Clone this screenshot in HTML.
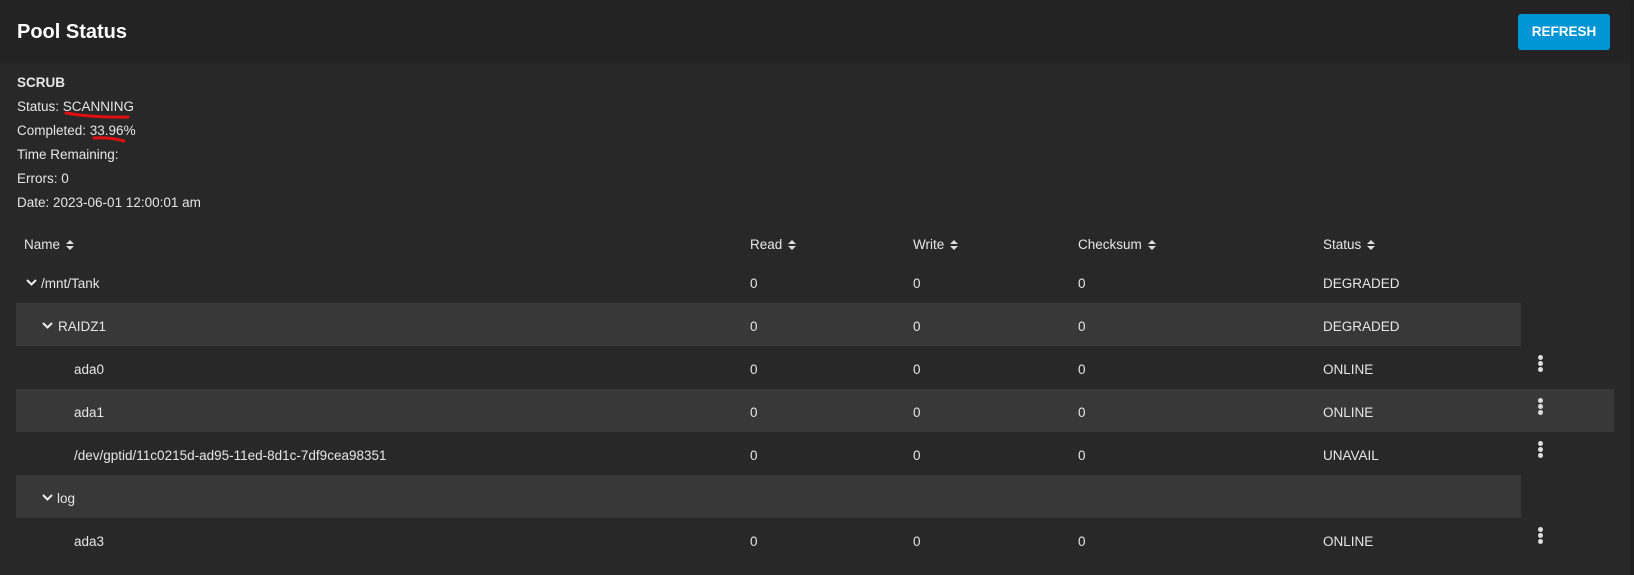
<!DOCTYPE html>
<html><head><style>
body{margin:0;width:1634px;height:575px;background:#1e1e1e;font-family:"Liberation Sans",sans-serif;color:#e6e6e6;overflow:hidden;position:relative}
.card{position:absolute;left:0;top:0;width:1630px;height:575px;background:#282828;border-top-right-radius:4px}
.hdr{position:absolute;left:0;top:0;width:1630px;height:63px;background:#232323;border-top-right-radius:4px}
.title{position:absolute;left:17px;top:21px;font-size:20px;font-weight:bold;color:#fff}
.btn{position:absolute;left:1518px;top:14px;width:92px;height:36px;background:#0095d5;border-radius:3px;color:#fff;font-weight:bold;font-size:13.5px;text-align:center;line-height:36px}
.t{position:absolute;font-size:13.5px;white-space:nowrap}
.stripe{position:absolute;left:16px;height:43px;background:#383838}
.dots{position:absolute;width:5px}
.dots i{display:block;width:5px;height:5px;border-radius:50%;background:#ddd;margin-bottom:1px}
.sort{display:inline-block;vertical-align:middle;margin-left:6px}
</style></head><body>
<div class="card"></div>
<div class="hdr"></div>
<div class="title">Pool Status</div>
<div class="btn">REFRESH</div>

<div class="t" style="left:17px;top:75px;font-weight:bold">SCRUB</div>
<div class="t" style="left:17px;top:99px">Status: SCANNING</div>
<div class="t" style="left:17px;top:123px">Completed: 33.96%</div>
<div class="t" style="left:17px;top:147px">Time Remaining:</div>
<div class="t" style="left:17px;top:171px">Errors: 0</div>
<div class="t" style="left:17px;top:195px">Date: 2023-06-01 12:00:01 am</div>
<svg style="position:absolute;left:0;top:0" width="200" height="150"><path d="M66 113 Q95 118 128 117" stroke="#e01010" stroke-width="3" fill="none" stroke-linecap="round"/><path d="M94 138 Q110 137 124 141" stroke="#e01010" stroke-width="3" fill="none" stroke-linecap="round"/></svg>

<div class="stripe" style="top:303px;width:1505px"></div>
<div class="stripe" style="top:389px;width:1598px"></div>
<div class="stripe" style="top:475px;width:1505px"></div>

<svg width="0" height="0" style="position:absolute"><defs><g id="s"><path d="M0 4 L4 0 L8 4Z M0 6 L4 10 L8 6Z" fill="#ddd"/></g><g id="c"><path d="M1 2 L5.5 6.5 L10 2" stroke="#eee" stroke-width="2" fill="none"/></g></defs></svg>

<div class="t" style="left:24px;top:237px">Name<svg class="sort" width="8" height="10"><use href="#s"/></svg></div>
<div class="t" style="left:750px;top:237px">Read<svg class="sort" width="8" height="10"><use href="#s"/></svg></div>
<div class="t" style="left:913px;top:237px">Write<svg class="sort" width="8" height="10"><use href="#s"/></svg></div>
<div class="t" style="left:1078px;top:237px">Checksum<svg class="sort" width="8" height="10"><use href="#s"/></svg></div>
<div class="t" style="left:1323px;top:237px">Status<svg class="sort" width="8" height="10"><use href="#s"/></svg></div>

<svg style="position:absolute;left:26px;top:278px" width="12" height="9"><use href="#c"/></svg>
<div class="t" style="left:41px;top:276px">/mnt/Tank</div>
<svg style="position:absolute;left:42px;top:321px" width="12" height="9"><use href="#c"/></svg>
<div class="t" style="left:58px;top:319px">RAIDZ1</div>
<div class="t" style="left:74px;top:362px">ada0</div>
<div class="t" style="left:74px;top:405px">ada1</div>
<div class="t" style="left:74px;top:448px">/dev/gptid/11c0215d-ad95-11ed-8d1c-7df9cea98351</div>
<svg style="position:absolute;left:42px;top:493px" width="12" height="9"><use href="#c"/></svg>
<div class="t" style="left:57px;top:491px">log</div>
<div class="t" style="left:74px;top:534px">ada3</div>

<div class="t" style="left:750px;top:276px">0</div><div class="t" style="left:913px;top:276px">0</div><div class="t" style="left:1078px;top:276px">0</div><div class="t" style="left:1323px;top:276px">DEGRADED</div>
<div class="t" style="left:750px;top:319px">0</div><div class="t" style="left:913px;top:319px">0</div><div class="t" style="left:1078px;top:319px">0</div><div class="t" style="left:1323px;top:319px">DEGRADED</div>
<div class="t" style="left:750px;top:362px">0</div><div class="t" style="left:913px;top:362px">0</div><div class="t" style="left:1078px;top:362px">0</div><div class="t" style="left:1323px;top:362px">ONLINE</div>
<div class="t" style="left:750px;top:405px">0</div><div class="t" style="left:913px;top:405px">0</div><div class="t" style="left:1078px;top:405px">0</div><div class="t" style="left:1323px;top:405px">ONLINE</div>
<div class="t" style="left:750px;top:448px">0</div><div class="t" style="left:913px;top:448px">0</div><div class="t" style="left:1078px;top:448px">0</div><div class="t" style="left:1323px;top:448px">UNAVAIL</div>
<div class="t" style="left:750px;top:534px">0</div><div class="t" style="left:913px;top:534px">0</div><div class="t" style="left:1078px;top:534px">0</div><div class="t" style="left:1323px;top:534px">ONLINE</div>

<div class="dots" style="left:1538px;top:355px"><i></i><i></i><i></i></div>
<div class="dots" style="left:1538px;top:398px"><i></i><i></i><i></i></div>
<div class="dots" style="left:1538px;top:441px"><i></i><i></i><i></i></div>
<div class="dots" style="left:1538px;top:527px"><i></i><i></i><i></i></div>
</body></html>
